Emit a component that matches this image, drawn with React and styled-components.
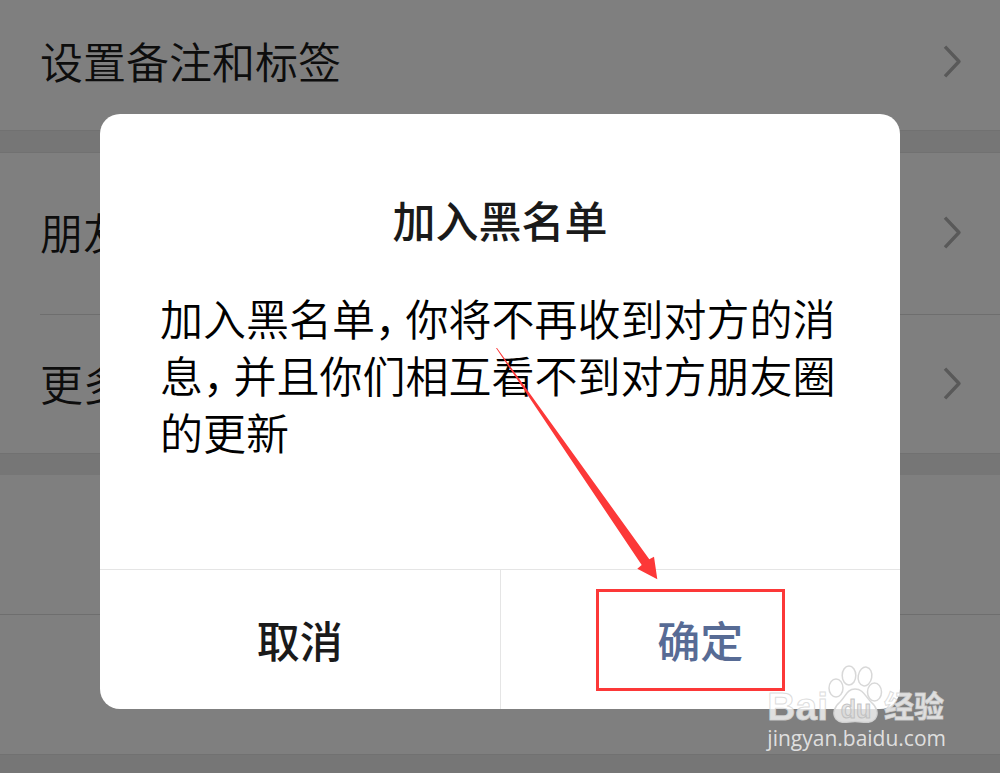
import styled, { createGlobalStyle } from 'styled-components'

const GlobalStyle = createGlobalStyle`
  * {
    box-sizing: border-box;
  }

  body {
    margin: 0;
    background: #ededed;
    font-family: 'Noto Sans CJK SC', sans-serif;
    overflow: hidden;
  }
`

const Page = styled.div`
  position: relative;
  min-height: 100vh;
`

const Group = styled.section`
  margin-bottom: 21px;
  background: #fff;
  border-bottom: 1px solid #e2e2e2;
  border-top: ${props => (props.$topLine ? '1px solid #e2e2e2' : 'none')};
`

const SettingRow = styled.a`
  display: flex;
  align-items: center;
  justify-content: space-between;
  padding: ${props => props.$top}px 38px ${props => props.$bottom}px 40px;
  color: #1a1a1a;
  font-size: 43px;
  font-weight: 350;
  line-height: 56px;
  text-decoration: none;
`

const Divider = styled.hr`
  height: 1px;
  margin: 0 0 0 ${props => (props.$inset ? '40px' : '0')};
  border: none;
  background: #dcdcdc;
`

const EmptyRow = styled.div`
  height: 139px;
`

const Overlay = styled.div`
  position: absolute;
  inset: 0;
  display: flex;
  align-items: flex-start;
  justify-content: center;
  padding-top: 114px;
  background: rgba(0, 0, 0, 0.5);
`

const Dialog = styled.div`
  position: relative;
  width: 80%;
  border-radius: 20px;
  background: #fff;
`

const DialogBody = styled.div`
  padding: 77px 60px 109px;
`

const Title = styled.h1`
  margin: 0 0 42px;
  color: #1a1a1a;
  font-size: 43px;
  font-weight: 500;
  line-height: 56px;
  text-align: center;
`

const Message = styled.p`
  margin: 0;
  color: #000;
  font-size: 43px;
  font-weight: 350;
  line-height: 57px;
`

const Comma = styled.span`
  margin-right: 9px;
  font-feature-settings: 'halt';
`

const Actions = styled.div`
  display: flex;
  border-top: 1px solid #e5e5e5;
`

const ActionButton = styled.button`
  position: relative;
  flex: 1;
  padding: 41px 0 42px;
  border: none;
  background: none;
  color: ${props => (props.$primary ? '#576b95' : '#1a1a1a')};
  font-family: inherit;
  font-size: 43px;
  font-weight: 500;
  line-height: 56px;

  & + & {
    border-left: 1px solid #e5e5e5;
  }
`

const Highlight = styled.span`
  position: absolute;
  top: 19px;
  left: 24%;
  width: 189px;
  height: 102px;
  border: 3px solid #fc3838;
`

const Arrow = styled.svg`
  position: absolute;
  bottom: 129px;
  left: calc(50% - 4px);
  pointer-events: none;
`

const Watermark = styled.div`
  position: absolute;
  right: 54px;
  bottom: 21px;
`

const Brand = styled.div`
  display: flex;
  align-items: flex-end;
  height: 60px;
  color: rgba(255, 255, 255, 0.75);
  font-family: 'Liberation Sans', sans-serif;
  font-size: 39px;
  font-weight: 700;
  line-height: 34px;
  -webkit-text-stroke: 1px rgba(212, 212, 212, 0.8);
`

const BrandName = styled.span`
  font-family: 'Noto Sans CJK SC', sans-serif;
  font-size: 30px;
  line-height: 40px;
`

const Site = styled.div`
  color: rgba(236, 236, 236, 0.9);
  font-family: 'Open Sans', sans-serif;
  font-size: 21px;
  font-weight: 500;
  line-height: 28px;
`

function Chevron() {
  return (
    <svg width="22" height="36" viewBox="0 0 22 36" fill="none" aria-hidden="true">
      <path d="M5 4.7 L19 19.5 L5 34.3" stroke="#b2b2b2" strokeWidth="3.4" strokeLinejoin="round" />
    </svg>
  )
}

function Paw() {
  return (
    <svg width="56" height="60" viewBox="0 0 56 60" aria-hidden="true">
      <g fill="rgba(255,255,255,0.75)" stroke="rgba(212,212,212,0.9)" strokeWidth="1.5">
        <ellipse cx="8" cy="24" rx="7" ry="9" />
        <ellipse cx="21" cy="11.5" rx="6.8" ry="9.5" />
        <ellipse cx="37" cy="12.5" rx="6.8" ry="9.5" transform="rotate(10 37 12.5)" />
        <ellipse cx="46.5" cy="28" rx="7" ry="9" />
        <path d="M27 25 C35 25 37 32 43 38 C49 43 51 50 47 55 C42 60.5 34 57.5 27 57.5 C20 57.5 13 60.5 8 55 C4 50 6 43 12 38 C18 32 19 25 27 25 Z" />
      </g>
      <text
        x="28"
        y="54"
        fill="rgba(215,215,215,0.6)"
        stroke="rgba(185,185,185,0.8)"
        strokeWidth="1"
        fontFamily="Liberation Sans, sans-serif"
        fontSize="25"
        fontWeight="700"
        textAnchor="middle"
      >
        du
      </text>
    </svg>
  )
}

function App() {
  return (
    <Page>
      <GlobalStyle />
      <Group>
        <SettingRow href="#remark" $top={32} $bottom={42}>
          设置备注和标签
          <Chevron />
        </SettingRow>
      </Group>
      <Group $topLine>
        <SettingRow href="#moments" $top={50} $bottom={55}>
          朋友权限
          <Chevron />
        </SettingRow>
        <Divider $inset />
        <SettingRow href="#more" $top={39} $bottom={43}>
          更多信息
          <Chevron />
        </SettingRow>
      </Group>
      <Group>
        <EmptyRow />
        <Divider />
        <EmptyRow />
      </Group>
      <Overlay>
        <Dialog role="dialog" aria-labelledby="dialog-title">
          <DialogBody>
            <Title id="dialog-title">加入黑名单</Title>
            <Message>
              加入黑名单<Comma>，</Comma>你将不再收到对方的消息<Comma>，</Comma>并且你们相互看不到对方朋友圈的更新
            </Message>
          </DialogBody>
          <Actions>
            <ActionButton type="button">取消</ActionButton>
            <ActionButton type="button" $primary>
              确定
              <Highlight />
            </ActionButton>
          </Actions>
          <Arrow width="162" height="232" viewBox="0 0 162 232" aria-hidden="true">
            <path
              d="M0 0 L1 0 L153.3 211.3 L158 208.7 L161.3 231.3 L141.3 220.7 L145.7 217 Z"
              fill="#fc3838"
            />
          </Arrow>
        </Dialog>
      </Overlay>
      <Watermark>
        <Brand>
          Bai
          <Paw />
          <BrandName>经验</BrandName>
        </Brand>
        <Site>jingyan.baidu.com</Site>
      </Watermark>
    </Page>
  )
}

export default App
